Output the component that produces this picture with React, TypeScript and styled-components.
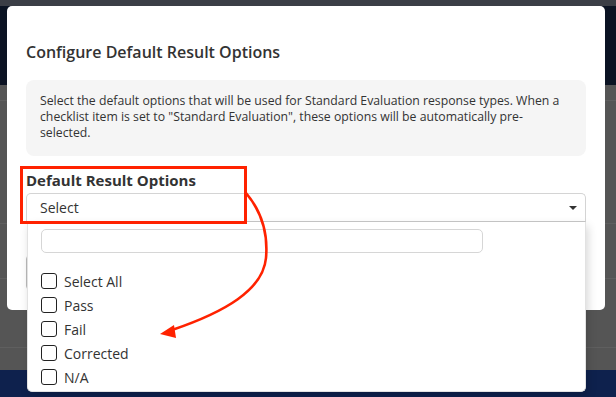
import React from 'react';
import styled, { createGlobalStyle } from 'styled-components';

const GlobalStyle = createGlobalStyle`
  html, body {
    margin: 0;
    padding: 0;
    background: #555555;
  }
  body {
    font-family: 'Open Sans', 'Noto Sans', Arial, sans-serif;
    color: #333;
  }
`;

const Page = styled.div`
  position: relative;
  width: 616px;
  height: 397px;
  overflow: hidden;
  display: flex;
  flex-direction: column;
`;

const TopStrip = styled.div`
  height: 6px;
  background: #3b3e46;
`;

const NavBand = styled.div`
  height: 79px;
  background: #0b1323;
`;

const Backdrop = styled.div`
  flex: 1;
  display: flex;
  flex-direction: column;
  background: #555555;
`;

const BackdropRow = styled.div<{ $h: number }>`
  height: ${(p) => p.$h}px;
  border-bottom: 1px solid #5f5f5f;
`;

const BottomBand = styled.div`
  height: 27px;
  background: #0e214d;
`;

const Modal = styled.div`
  position: absolute;
  top: 6px;
  left: 7px;
  width: 598px;
  height: 304px;
  box-sizing: border-box;
  background: #fff;
  border-radius: 5px;
  padding: 36px 19px 0 19px;
  display: flex;
  flex-direction: column;
`;

const Title = styled.h2`
  margin: 0 0 18px;
  font-size: 16px;
  line-height: 20px;
  font-weight: 600;
  color: #333;
`;

const InfoBox = styled.div`
  background: #f5f5f5;
  border-radius: 8px;
  padding: 13px 22px 15px 14px;
  font-size: 12.25px;
  line-height: 16px;
  color: #333;
`;

const Field = styled.div`
  position: relative;
  margin-top: 14px;
  display: flex;
  flex-direction: column;
`;

const FieldLabel = styled.label`
  font-size: 15px;
  line-height: 20px;
  font-weight: 700;
  color: #333;
  margin-bottom: 3px;
`;

const SelectBox = styled.div`
  height: 29px;
  box-sizing: border-box;
  border: 1px solid #d4d4d4;
  border-bottom-color: #c8c8c8;
  border-radius: 5px 5px 0 0;
  padding: 0 8px 0 13px;
  display: flex;
  align-items: center;
  justify-content: space-between;
  font-size: 14px;
  color: #333;
`;

const Caret = styled.span`
  width: 0;
  height: 0;
  border-left: 4px solid transparent;
  border-right: 4px solid transparent;
  border-top: 4px solid #333;
`;

const Dropdown = styled.div`
  position: absolute;
  top: 52px;
  left: 1px;
  right: 0;
  height: 170px;
  box-sizing: border-box;
  background: #fff;
  border: 1px solid #e2e2e2;
  border-top: none;
  border-radius: 0 0 5px 5px;
  box-shadow: 2px 4px 10px rgba(0, 0, 0, 0.16);
  padding: 7px 0 0 13px;
  z-index: 2;
`;

const SearchInput = styled.input`
  display: block;
  width: 442px;
  height: 24px;
  box-sizing: border-box;
  border: 1px solid #d6d6d6;
  border-radius: 5px;
  outline: none;
  font-family: inherit;
  font-size: 13px;
`;

const OptionList = styled.ul`
  list-style: none;
  margin: 16px 0 0;
  padding: 0;
`;

const Option = styled.li`
  height: 24px;
  display: flex;
  align-items: center;
  gap: 7px;
  font-size: 14px;
  color: #333;
`;

const Checkbox = styled.span`
  width: 16px;
  height: 16px;
  box-sizing: border-box;
  border: 1.5px solid #222;
  border-radius: 3px;
`;

const FooterButton = styled.div`
  margin-top: 33px;
  width: 90px;
  height: 35px;
  box-sizing: border-box;
  border: 1px solid #bbb;
  border-radius: 4px;
`;

const Annotation = styled.svg`
  position: absolute;
  inset: 0;
  pointer-events: none;
  z-index: 5;
`;

const options = ['Select All', 'Pass', 'Fail', 'Corrected', 'N/A'];

const App: React.FC = () => {
  return (
    <>
      <GlobalStyle />
      <Page>
        <TopStrip />
        <NavBand />
        <Backdrop>
          <BackdropRow $h={15} />
          <BackdropRow $h={122} />
          <BackdropRow $h={54} />
          <BackdropRow $h={68} />
        </Backdrop>
        <BottomBand />

        <Modal>
          <Title>Configure Default Result Options</Title>
          <InfoBox>
            Select the default options that will be used for Standard Evaluation response types. When a
            checklist item is set to "Standard Evaluation", these options will be automatically pre-selected.
          </InfoBox>
          <Field>
            <FieldLabel>Default Result Options</FieldLabel>
            <SelectBox>
              <span>Select</span>
              <Caret />
            </SelectBox>
            <Dropdown>
              <SearchInput type="text" />
              <OptionList>
                {options.map((o) => (
                  <Option key={o}>
                    <Checkbox />
                    {o}
                  </Option>
                ))}
              </OptionList>
            </Dropdown>
          </Field>
          <FooterButton />
        </Modal>

        <Annotation width="616" height="397" viewBox="0 0 616 397">
          <rect x="21.5" y="167.5" width="224" height="55" fill="none" stroke="#ff2200" strokeWidth="3" />
          <path
            d="M246 193 C262 212 268 235 266 258 C263 290 225 312 172 330"
            fill="none"
            stroke="#ff2200"
            strokeWidth="2.6"
          />
          <polygon points="160,334 174,325 176,338" fill="#ff2200" />
        </Annotation>
      </Page>
    </>
  );
};

export default App;
